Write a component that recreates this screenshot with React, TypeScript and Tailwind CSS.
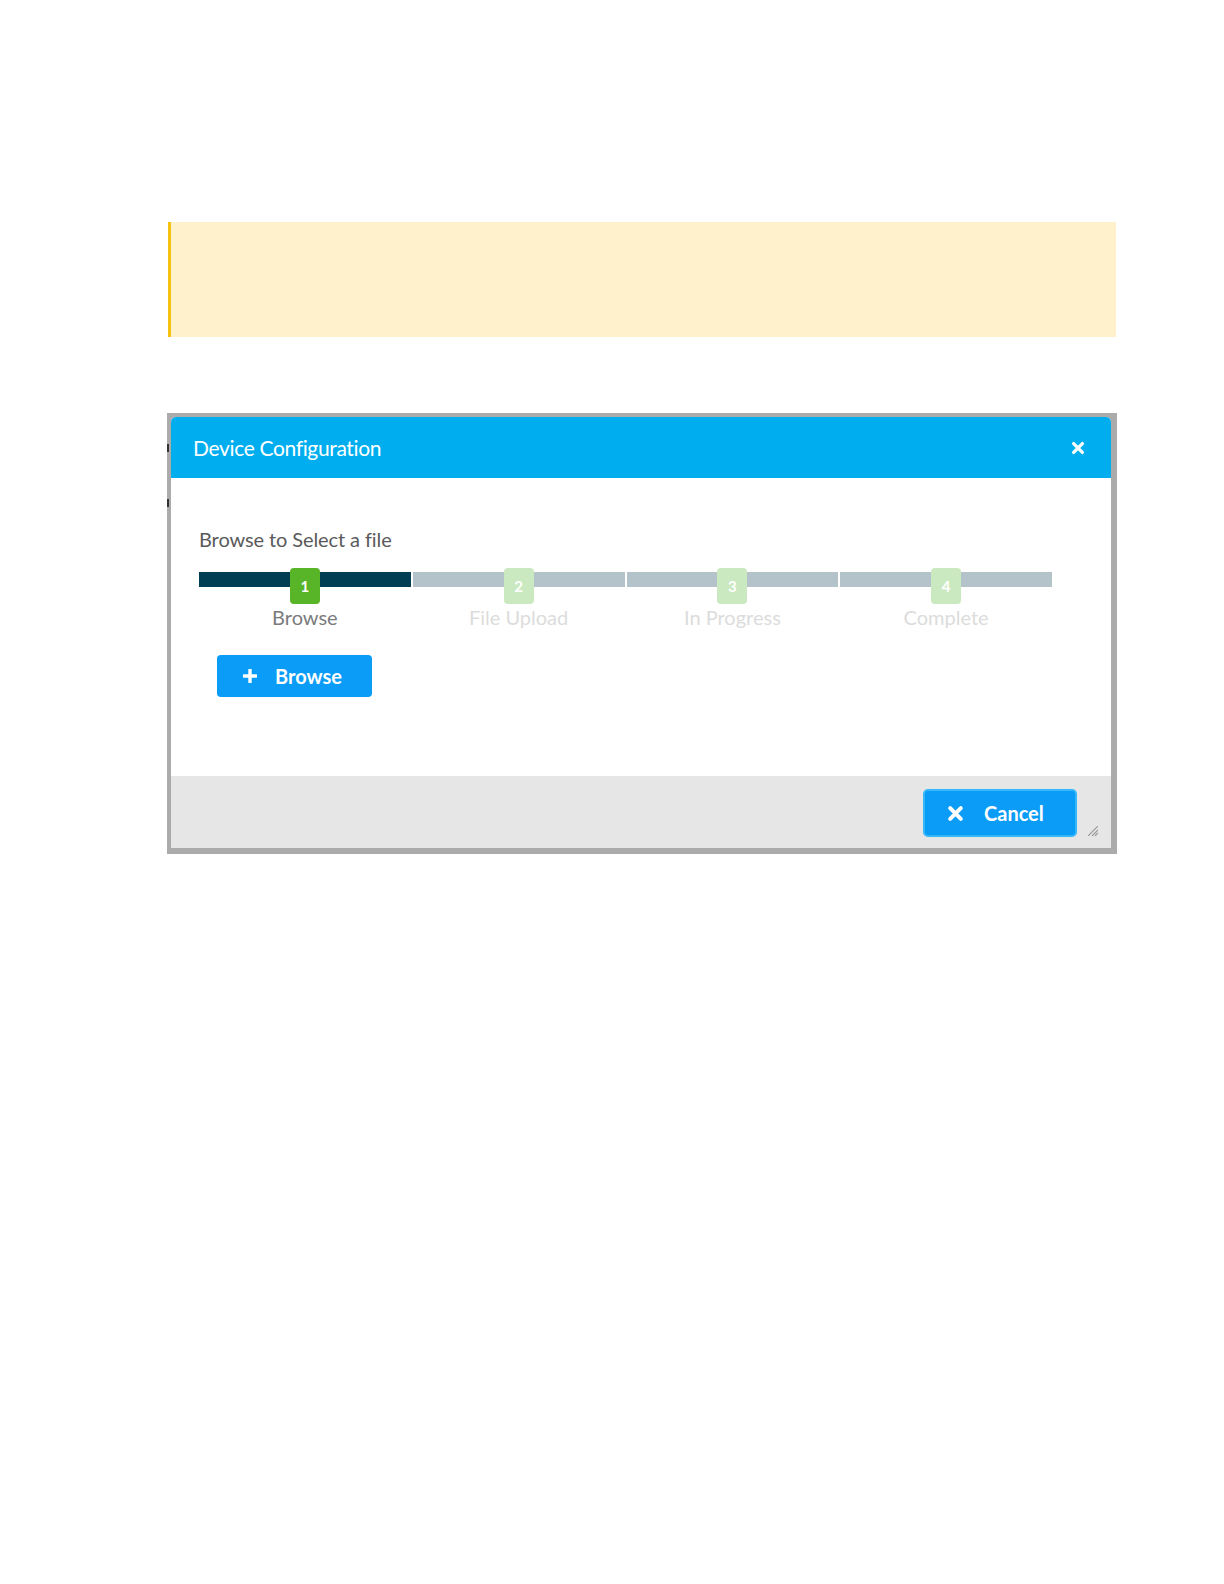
type Step = {
  id: number;
  label: string;
  active: boolean;
};

const steps: Step[] = [
  { id: 1, label: "Browse", active: true },
  { id: 2, label: "File Upload", active: false },
  { id: 3, label: "In Progress", active: false },
  { id: 4, label: "Complete", active: false },
];

function CrossIcon({ size, stroke }: { size: number; stroke: number }) {
  return (
    <svg width={size} height={size} viewBox="0 0 16 16">
      <path
        d="M3 3 L13 13 M13 3 L3 13"
        stroke="white"
        strokeWidth={stroke}
        strokeLinecap="round"
      />
    </svg>
  );
}

function PlusIcon() {
  return (
    <svg width="14" height="14" viewBox="0 0 14 14">
      <path d="M7 1 V13 M1 7 H13" stroke="white" strokeWidth="3.4" strokeLinecap="round" />
    </svg>
  );
}

export default function App() {
  return (
    <div
      className="min-h-[1584px] w-[1224px] bg-white pt-[222px]"
      style={{ fontFamily: "Lato, 'Open Sans', sans-serif" }}
    >
      {/* Notice */}
      <div className="ml-[168px] h-[115px] w-[948px] border-l-[3px] border-[#f5c211] bg-[#fff1cc]" />

      {/* Dialog frame */}
      <div className="relative ml-[167px] mt-[76px] w-[950px] bg-[#ababab] pb-[6px] pl-[4px] pr-[6px] pt-[4px]">
        <span className="absolute left-0 top-[31px] h-[8px] w-[2px] bg-[#333]" />
        <span className="absolute left-0 top-[86px] h-[8px] w-[2px] bg-[#333]" />

        <div className="overflow-hidden rounded-t-[5px] bg-white">
          {/* Header */}
          <div className="flex h-[61px] items-center justify-between bg-[#00aeef] pl-[22px] pr-[26px]">
            <h2 className="text-[21px] leading-none tracking-[-0.35px] text-white">
              Device Configuration
            </h2>
            <CrossIcon size={14} stroke={3.8} />
          </div>

          {/* Body */}
          <div className="h-[298px] pl-[28px] pt-[50px]">
            <p className="text-[20px] leading-[23px] tracking-[-0.1px] text-[#5a5a5a]">
              Browse to Select a file
            </p>

            <div className="mt-[17px] flex w-[853px] gap-[2px]">
              {steps.map((step) => (
                <div key={step.id} className="flex flex-1 flex-col items-center">
                  <div className="relative h-[36px] w-full">
                    <div
                      className={
                        step.active
                          ? "absolute left-0 right-0 top-[4px] h-[15px] bg-[#023e53]"
                          : "absolute left-0 right-0 top-[4px] h-[15px] bg-[#b4c3c9]"
                      }
                    />
                    <div
                      className={
                        step.active
                          ? "absolute left-1/2 top-0 flex h-[36px] w-[30px] -translate-x-1/2 items-center justify-center rounded-[4px] bg-[#57b527] text-[15px] font-bold text-white"
                          : "absolute left-1/2 top-0 flex h-[36px] w-[30px] -translate-x-1/2 items-center justify-center rounded-[4px] bg-[#cbe9c0] text-[15px] font-bold text-white"
                      }
                    >
                      {step.id}
                    </div>
                  </div>
                  <span
                    className={
                      step.active
                        ? "mt-[1px] text-[20px] leading-[24px] text-[#7b7b7b]"
                        : "mt-[1px] text-[20px] leading-[24px] text-[#dcdcdc]"
                    }
                  >
                    {step.label}
                  </span>
                </div>
              ))}
            </div>

            <button className="ml-[18px] mt-[26px] flex h-[42px] w-[155px] items-center rounded-[4px] bg-[#0a9cf7] pl-[26px] text-[20px] font-bold text-white">
              <PlusIcon />
              <span className="ml-[18px]">Browse</span>
            </button>
          </div>

          {/* Footer */}
          <div className="relative flex h-[72px] items-start justify-end bg-[#e6e6e6] pr-[34px] pt-[13px]">
            <button className="flex h-[48px] w-[154px] items-center rounded-[5px] border-2 border-[#35b8fb] bg-[#0a9cf7] pl-[22px] text-[20px] font-bold text-white">
              <CrossIcon size={17} stroke={3.8} />
              <span className="ml-[20px]">Cancel</span>
            </button>
            <svg
              className="absolute bottom-[12px] right-[13px]"
              width="10"
              height="10"
              viewBox="0 0 10 10"
            >
              <path d="M10 0 L0 10 M10 4 L4 10 M10 7 L7 10" stroke="#9a9a9a" strokeWidth="1.2" />
            </svg>
          </div>
        </div>
      </div>
    </div>
  );
}
